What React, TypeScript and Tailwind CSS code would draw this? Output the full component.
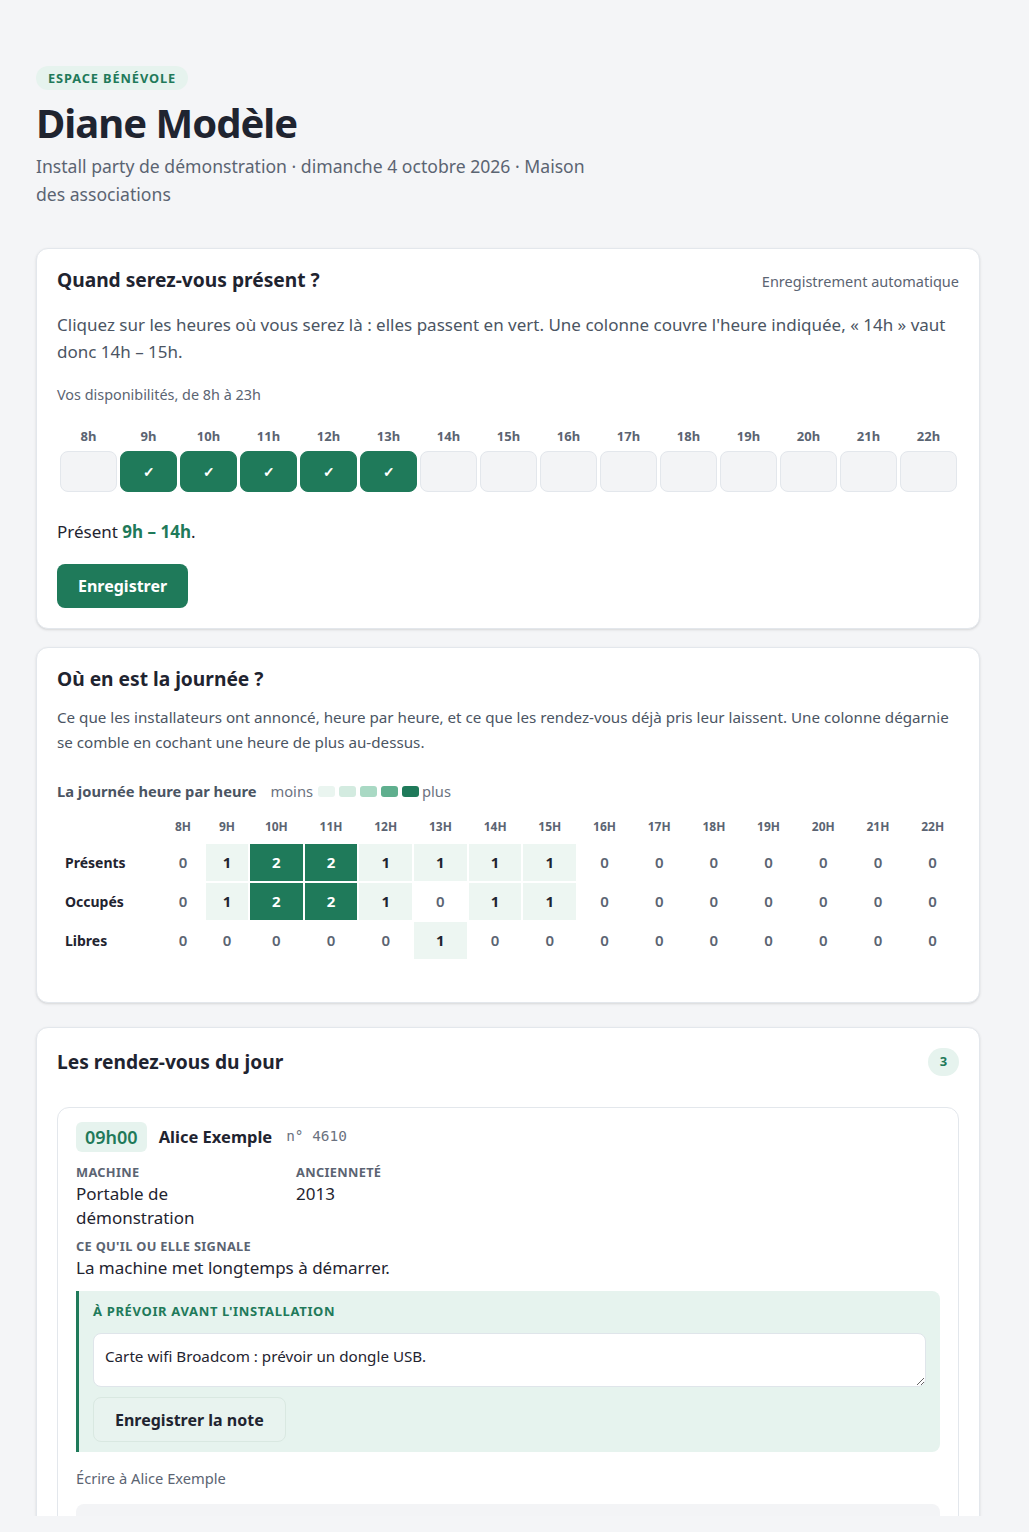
import { useState } from 'react'

const HOURS = [8, 9, 10, 11, 12, 13, 14, 15, 16, 17, 18, 19, 20, 21, 22]

const DAY_ROWS: { label: string; values: number[] }[] = [
  { label: 'Présents', values: [0, 1, 2, 2, 1, 1, 1, 1, 0, 0, 0, 0, 0, 0, 0] },
  { label: 'Occupés', values: [0, 1, 2, 2, 1, 0, 1, 1, 0, 0, 0, 0, 0, 0, 0] },
  { label: 'Libres', values: [0, 0, 0, 0, 0, 1, 0, 0, 0, 0, 0, 0, 0, 0, 0] },
]

const APPOINTMENTS = [
  {
    time: '09h00', name: 'Alice Exemple', num: '4610', machine: 'Portable de démonstration', year: '2013',
    issue: 'La machine met longtemps à démarrer.', note: 'Carte wifi Broadcom : prévoir un dongle USB.',
  },
  {
    time: '10h00', name: 'Bruno Essai', num: '4611', machine: 'Tour de bureau', year: '2015',
    issue: "Windows ne reçoit plus de mises à jour.", note: '',
  },
  {
    time: '11h00', name: 'Chloé Test', num: '4612', machine: 'Netbook', year: '2011',
    issue: 'Très lent, veut surtout naviguer et lire ses mails.', note: '',
  },
]

function cellClass(v: number) {
  if (v >= 2) return 'bg-[#1f7a5a] text-white font-bold'
  if (v === 1) return 'bg-[#edf6f2] text-[#1f2430] font-bold'
  return 'text-[#5b6472] font-semibold'
}

function Appointment({ a }: { a: typeof APPOINTMENTS[number] }) {
  return (
    <div className="rounded-xl border border-[#e3e7ec] px-[18px] pt-[14px] pb-5">
      <div className="flex items-center h-[30px]">
        <span className="h-[30px] px-[9px] rounded-md bg-[#e6f3ee] text-[#1f7a5a] text-[18px] font-semibold leading-[30px]">{a.time}</span>
        <span className="ml-3 text-[16.5px] font-bold text-[#1f2430]">{a.name}</span>
        <span className="ml-3.5 text-[14.4px] text-[#6b7280] font-['DejaVu_Sans_Mono',monospace]">n° {a.num}</span>
      </div>

      <div className="mt-3 flex">
        <div className="w-[220px]">
          <p className="text-[12.8px] leading-4 font-bold uppercase tracking-wide text-[#5b6472]">Machine</p>
          <p className="mt-0.5 text-[17px] leading-6 text-[#1f2430] pr-6">{a.machine}</p>
        </div>
        <div>
          <p className="text-[12.8px] leading-4 font-bold uppercase tracking-wide text-[#5b6472]">Ancienneté</p>
          <p className="mt-0.5 text-[17px] leading-6 text-[#1f2430]">{a.year}</p>
        </div>
      </div>

      <p className="mt-2 text-[12.8px] leading-4 font-bold uppercase tracking-wide text-[#5b6472]">Ce qu'il ou elle signale</p>
      <p className="mt-0.5 text-[17px] leading-6 text-[#1f2430]">{a.issue}</p>

      <div className="mt-[11px] rounded-r-lg border-l-[3px] border-[#1f7a5a] bg-[#e6f3ee] pl-[14px] pr-[14px] pt-3 pb-2.5">
        <p className="text-[13px] leading-4 font-bold uppercase tracking-[0.05em] text-[#1f7a5a]">À prévoir avant l'installation</p>
        <textarea
          defaultValue={a.note}
          className="mt-3.5 block w-full h-[54px] rounded-lg border border-[#dfe5ea] bg-white px-[11px] py-3 text-[15.2px] leading-5 text-[#1f2430] outline-none"
        />
        <button className="mt-2.5 h-[45px] px-[21px] rounded-lg border border-[#d9e8e1] bg-[#e8f3ef] text-base font-bold text-[#1f2430]">
          Enregistrer la note
        </button>
      </div>

      <p className="mt-4 text-[14.7px] leading-5 text-[#5b6472]">Écrire à {a.name}</p>
      <div className="mt-4 rounded-lg bg-[#f3f4f6] h-[90px]" />
    </div>
  )
}

export default function App() {
  const [avail, setAvail] = useState<number[]>([9, 10, 11, 12, 13])

  const toggle = (h: number) =>
    setAvail(prev => (prev.includes(h) ? prev.filter(x => x !== h) : [...prev, h].sort((x, y) => x - y)))

  const from = avail.length ? Math.min(...avail) : null
  const to = avail.length ? Math.max(...avail) + 1 : null

  return (
    <div className="h-[1532px] bg-[#f4f5f7] font-['Noto_Sans',sans-serif] text-[#1f2430]">
      <div className="w-[1013px] h-[1516px] overflow-y-scroll [&::-webkit-scrollbar]:w-3 [&::-webkit-scrollbar-track]:bg-[#fafafa] [&::-webkit-scrollbar-thumb]:bg-[#8b8b8b] [&::-webkit-scrollbar-thumb]:rounded-full [&::-webkit-scrollbar-thumb]:border-2 [&::-webkit-scrollbar-thumb]:border-solid [&::-webkit-scrollbar-thumb]:border-[#fafafa]">
        <div className="ml-9 w-[944px] pt-[65px] pb-10">
          {/* Header */}
          <span className="inline-block h-6 px-3 rounded-full bg-[#e6f3ee] text-[#1f7a5a] text-[12.8px] leading-6 font-bold uppercase tracking-[0.07em]">
            Espace bénévole
          </span>
          <h1 className="mt-[9px] text-[40px] leading-[48px] font-bold tracking-tight text-[#1f2430]">Diane Modèle</h1>
          <p className="mt-[5px] max-w-xl text-[17.6px] leading-7 text-[#5b6472]">
            Install party de démonstration · dimanche 4 octobre 2026 · Maison des associations
          </p>

          {/* Availability */}
          <section className="mt-[40px] rounded-xl border border-[#e3e7ec] bg-white shadow-sm p-5">
            <div className="flex items-center justify-between h-[22px]">
              <h2 className="text-[19.2px] leading-[22px] font-bold">Quand serez-vous présent ?</h2>
              <span className="text-[14.5px] text-[#5b6472] mt-1">Enregistrement automatique</span>
            </div>
            <p className="mt-5 text-[17px] leading-[27px] text-[#4b5563]">
              Cliquez sur les heures où vous serez là : elles passent en vert. Une colonne couvre l'heure indiquée, « 14h » vaut donc 14h – 15h.
            </p>
            <p className="mt-5 text-[14.4px] leading-5 text-[#5b6472]">Vos disponibilités, de 8h à 23h</p>

            <div className="mt-[22px] pl-[3px] pr-[2px] grid grid-cols-[repeat(15,minmax(0,1fr))] gap-x-[3px]">
              {HOURS.map(h => (
                <span key={h} className="text-center text-[13px] leading-[18px] font-bold text-[#5b6472]">{h}h</span>
              ))}
              {HOURS.map(h => {
                const on = avail.includes(h)
                return (
                  <button
                    key={h}
                    onClick={() => toggle(h)}
                    className={`mt-1.5 h-[41px] rounded-lg border text-sm font-bold ${
                      on ? 'bg-[#1f7a5a] border-[#1f7a5a] text-white' : 'bg-[#f3f4f6] border-[#e3e7ec]'
                    }`}
                  >
                    {on ? '✓' : ''}
                  </button>
                )
              })}
            </div>

            <p className="mt-[28px] text-[17px] leading-6">
              Présent{' '}
              {from !== null && (
                <span className="font-bold text-[#1f7a5a]">{from}h – {to}h</span>
              )}
              .
            </p>
            <button className="mt-[20px] h-11 px-[21px] rounded-lg bg-[#1f7a5a] text-white text-base font-bold">
              Enregistrer
            </button>
          </section>

          {/* Day overview */}
          <section className="mt-[18px] rounded-xl border border-[#e3e7ec] bg-white shadow-sm px-5 pt-5 pb-[43px]">
            <h2 className="text-[19.2px] leading-[22px] font-bold">Où en est la journée ?</h2>
            <p className="mt-[15px] text-[15.2px] leading-[25px] text-[#4b5563]">
              Ce que les installateurs ont annoncé, heure par heure, et ce que les rendez-vous déjà pris leur laissent. Une colonne dégarnie se comble en cochant une heure de plus au-dessus.
            </p>

            <div className="mt-[26px] flex items-center text-[14.7px] leading-5">
              <span className="font-bold text-[#4b5563]">La journée heure par heure</span>
              <span className="ml-[14px] text-[#6b7280]">moins</span>
              <span className="ml-[5px] flex gap-[4px]">
                <span className="w-[17px] h-[11px] rounded-[3px] bg-[#eaf5f0]" />
                <span className="w-[17px] h-[11px] rounded-[3px] bg-[#d3ebe0]" />
                <span className="w-[17px] h-[11px] rounded-[3px] bg-[#a9d9c4]" />
                <span className="w-[17px] h-[11px] rounded-[3px] bg-[#5faf8e]" />
                <span className="w-[17px] h-[11px] rounded-[3px] bg-[#1f7a5a]" />
              </span>
              <span className="ml-[3px] text-[#6b7280]">plus</span>
            </div>

            <div className="mt-[11px] grid grid-cols-[103px_42px_42px_repeat(13,minmax(0,1fr))] gap-[2px]">
              <span />
              {HOURS.map(h => (
                <span key={h} className="h-[30px] flex items-center justify-center text-[12px] font-bold text-[#5b6472]">{h}H</span>
              ))}
              {DAY_ROWS.map(row => (
                <div key={row.label} className="contents">
                  <span className="h-[37px] pl-2 flex items-center text-sm font-bold text-[#1f2430]">{row.label}</span>
                  {row.values.map((v, i) => (
                    <span key={i} className={`h-[37px] flex items-center justify-center text-[15px] ${cellClass(v)}`}>{v}</span>
                  ))}
                </div>
              ))}
            </div>
          </section>

          {/* Appointments */}
          <section className="mt-[24px] rounded-xl border border-[#e3e7ec] bg-white shadow-sm p-5">
            <div className="flex items-center justify-between h-7">
              <h2 className="text-[19.2px] leading-[22px] font-bold">Les rendez-vous du jour</h2>
              <span className="w-[31px] h-7 rounded-full bg-[#e6f3ee] text-[#1f7a5a] text-[13px] font-bold flex items-center justify-center">
                {APPOINTMENTS.length}
              </span>
            </div>
            <div className="mt-[31px] flex flex-col gap-4">
              {APPOINTMENTS.map(a => (
                <Appointment key={a.num} a={a} />
              ))}
            </div>
          </section>
        </div>
      </div>
    </div>
  )
}
